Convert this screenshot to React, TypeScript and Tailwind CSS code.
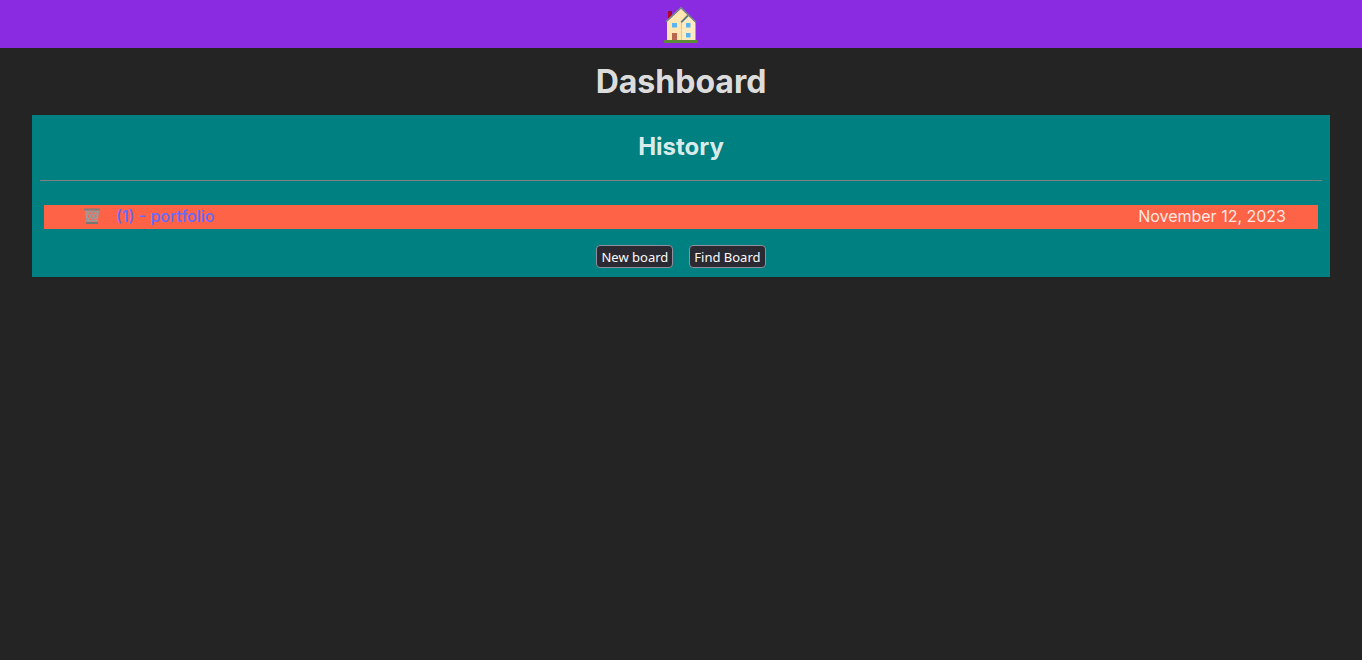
import React from "react";

function HouseIcon() {
  return (
    <svg viewBox="0 0 36 38" className="h-[38px] w-9" aria-hidden="true">
      <path d="M5 5.5h4v9H5z" fill="#b4002d" />
      <path d="M5 5h4v1.500H5z" fill="#8c1238" />
      <path d="M4 15.500 18 2.500 25 9l7 7v19H4z" fill="#ffe6b3" />
      <path d="M18.4 17.500 25 10.500l7.500 6.500v18H18.4z" fill="#ffebc2" />
      <path d="M18.500 17v18" stroke="#ffca3a" strokeWidth="1" />
      <path d="m3 15.6 15-14 7.6 7.500 7.4 7.2" fill="none" stroke="#78858c" strokeWidth="1.5" />
      <path d="m18.2 16.3 6.7-6.8" stroke="#607681" strokeWidth="1.8" />
      <path d="M9 17h5v4.500H9zM23 17h4.500v4.500H23zM23 27h4.500v4.500H23z" fill="#58b5ef" />
      <path d="M9 27h5v8H9z" fill="#bb674f" />
      <rect x="1" y="34" width="34" height="3" rx="1" fill="#5d8c35" />
    </svg>
  );
}

function BasketIcon() {
  return (
    <svg viewBox="0 0 16 16" className="h-4 w-4" aria-hidden="true">
      <path d="M1 2 2.500 15h11L15 2z" fill="#a98f8a" fillOpacity=".25" />
      <path
        d="m1.500 2 1.500 12.500M14.500 2 13 14.500M2 2l4.500 6L4 14M6 2 2.500 8l4 6M6 2l4 6-3.500 6M10 2 6.500 8l3.500 6M10 2l3.500 6-4 6M14 2 10 8l2.500 6"
        fill="none"
        stroke="#979d9f"
        strokeWidth="1.2"
      />
      <path d="M0 .5h16v2H0z" fill="#857b78" />
      <path d="M2 14h12v2H2z" fill="#7b7572" />
    </svg>
  );
}

const boards = [{ id: 1, name: "portfolio", date: "November 12, 2023" }];

const buttonClass =
  "h-[23px] rounded-[4px] border border-[#8f8f9d] bg-[#2b2a33] px-1 pt-px font-['Noto_Sans',sans-serif] text-[13px] leading-5 text-[#fbfbfe] hover:bg-[#52525e]";

export default function App() {
  return (
    <div className="min-h-screen bg-[#242424] font-[Inter,sans-serif] text-base text-white/87">
      <header className="flex h-12 justify-center bg-[#8a2be2] pt-1.5">
        <a href="#home" aria-label="Home" className="block h-[38px]">
          <HouseIcon />
        </a>
      </header>
      <main className="px-8">
        <h1 className="py-3 text-center text-[32px] leading-[43px] font-bold">Dashboard</h1>
        <section className="bg-[#008080] px-2 pb-[9px]">
          <h2 className="pt-4 pb-[17px] text-center text-2xl leading-8 font-bold">History</h2>
          <hr className="border-t border-[#808080]" />
          <ul className="mx-1 mt-6">
            {boards.map((board) => (
              <li key={board.id} className="flex h-6 items-center justify-between bg-[#ff6347] pr-8 pb-0.5 pl-10 leading-[22px]">
                <div className="flex items-center gap-4">
                  <button type="button" aria-label="Delete board">
                    <BasketIcon />
                  </button>
                  <a href="#portfolio" className="font-medium text-[#646cff]">
                    ({board.id}) - {board.name}
                  </a>
                </div>
                <span>{board.date}</span>
              </li>
            ))}
          </ul>
          <div className="mt-4 flex justify-center gap-4">
            <button type="button" className={buttonClass}>New board</button>
            <button type="button" className={buttonClass}>Find Board</button>
          </div>
        </section>
      </main>
    </div>
  );
}
